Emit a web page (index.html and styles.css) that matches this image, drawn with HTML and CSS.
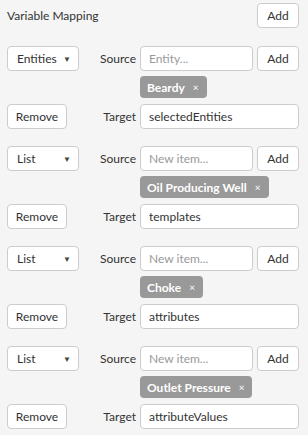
FILE: index.html
```html
<!DOCTYPE html>
<html>
<head>
<meta charset="utf-8">
<link rel="stylesheet" href="styles.css">
</head>
<body>
<div class="panel">
  <div class="header">
    <span class="title">Variable Mapping</span>
    <button class="btn add">Add</button>
  </div>

  <div class="group">
    <div class="select"><span>Entities</span><span class="caret">▼</span></div>
    <span class="label">Source</span>
    <div class="input placeholder">Entity...</div>
    <button class="btn add">Add</button>
    <div class="chips"><span class="chip">Beardy <span class="x">×</span></span></div>
    <button class="btn remove">Remove</button>
    <span class="label">Target</span>
    <div class="input wide">selectedEntities</div>
  </div>

  <div class="group">
    <div class="select"><span>List</span><span class="caret">▼</span></div>
    <span class="label">Source</span>
    <div class="input placeholder">New item...</div>
    <button class="btn add">Add</button>
    <div class="chips"><span class="chip">Oil Producing Well <span class="x">×</span></span></div>
    <button class="btn remove">Remove</button>
    <span class="label">Target</span>
    <div class="input wide">templates</div>
  </div>

  <div class="group">
    <div class="select"><span>List</span><span class="caret">▼</span></div>
    <span class="label">Source</span>
    <div class="input placeholder">New item...</div>
    <button class="btn add">Add</button>
    <div class="chips"><span class="chip">Choke <span class="x">×</span></span></div>
    <button class="btn remove">Remove</button>
    <span class="label">Target</span>
    <div class="input wide">attributes</div>
  </div>

  <div class="group">
    <div class="select"><span>List</span><span class="caret">▼</span></div>
    <span class="label">Source</span>
    <div class="input placeholder">New item...</div>
    <button class="btn add">Add</button>
    <div class="chips"><span class="chip">Outlet Pressure <span class="x">×</span></span></div>
    <button class="btn remove">Remove</button>
    <span class="label">Target</span>
    <div class="input wide">attributeValues</div>
  </div>
</div>
</body>
</html>
```

FILE: styles.css
```css
html, body {
  margin: 0;
  padding: 0;
  background: #f5f5f5;
}
body {
  font-family: Lato, "Open Sans", sans-serif;
  font-size: 12px;
  color: #333;
}
.panel {
  padding: 3px 9px 0 7px;
}
.header {
  display: flex;
  justify-content: space-between;
  align-items: center;
  height: 25px;
  margin-bottom: 18px;
}
.btn {
  box-sizing: border-box;
  height: 25px;
  border: 1px solid #ccc;
  border-radius: 4px;
  background: #fff;
  font-family: inherit;
  font-size: 12px;
  color: #333;
  padding: 0;
}
.add { width: 42px; }
.remove { width: 60px; }
.group {
  display: grid;
  grid-template-columns: 72px 1fr 113px 46px;
  grid-template-rows: 25px 23px 25px;
  row-gap: 5px;
  margin-bottom: 17px;
  align-items: center;
}
.group .add { justify-self: end; }
.select {
  box-sizing: border-box;
  height: 25px;
  border: 1px solid #ccc;
  border-radius: 4px;
  background: #fff;
  display: flex;
  align-items: center;
  justify-content: space-between;
  padding: 0 7px 0 9px;
}
.caret {
  font-size: 8px;
  color: #444;
}
.label {
  justify-self: end;
  padding-right: 4px;
}
.input {
  box-sizing: border-box;
  height: 25px;
  border: 1px solid #ccc;
  border-radius: 4px;
  background: #fff;
  display: flex;
  align-items: center;
  padding: 0 8px;
}
.placeholder { color: #999; }
.wide { grid-column: 3 / 5; }
.chips {
  grid-column: 3 / 5;
  align-self: start;
}
.chip {
  display: inline-flex;
  align-items: center;
  height: 22px;
  box-sizing: border-box;
  padding: 0 8px 0 7px;
  background: #999;
  color: #fff;
  font-weight: 700;
  border-radius: 4px;
}
.x {
  font-size: 10px;
  font-weight: 400;
  margin-left: 8px;
}
.remove { grid-column: 1; justify-self: start; }
```
